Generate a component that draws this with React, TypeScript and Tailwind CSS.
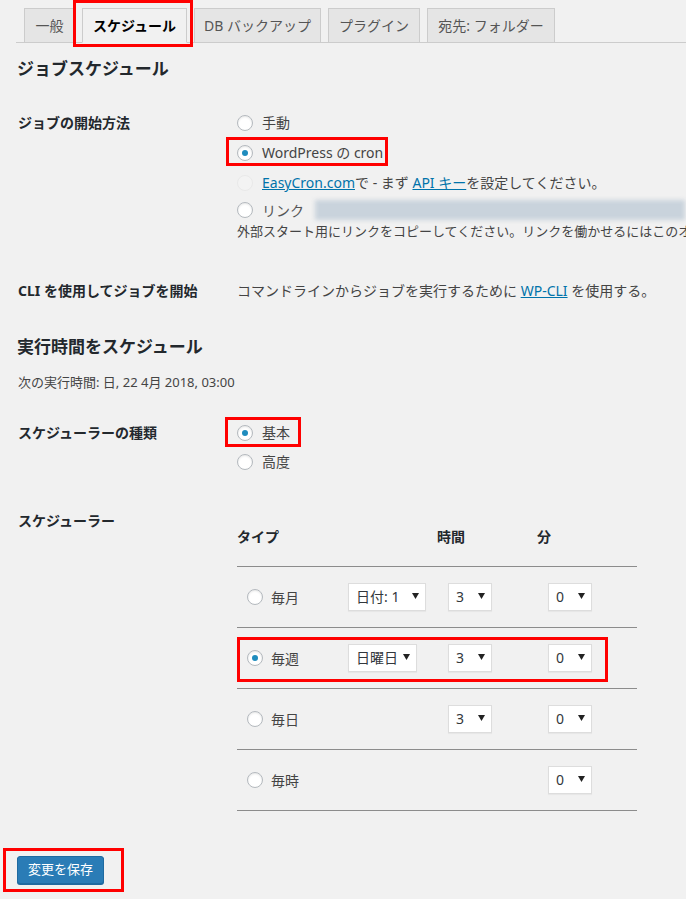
import React from "react";

function Radio({ checked = false, disabled = false }: { checked?: boolean; disabled?: boolean }) {
  if (disabled) {
    return (
      <span className="w-4 h-4 rounded-full border border-[#e9e9e9] bg-[#f3f3f3] shrink-0" />
    );
  }
  return (
    <span className="w-4 h-4 rounded-full border border-[#b4b9be] bg-white shadow-[inset_0_1px_2px_rgba(0,0,0,0.1)] flex items-center justify-center shrink-0">
      {checked && <span className="w-[6px] h-[6px] rounded-full bg-[#1e8cbe]" />}
    </span>
  );
}

function Arrow() {
  return (
    <svg width="7" height="6" viewBox="0 0 7 6" className="shrink-0 -mt-[2px]">
      <polygon points="0,0 7,0 3.5,6" fill="#222" />
    </svg>
  );
}

function Select({ value, w }: { value: string; w: string }) {
  return (
    <div
      className={`${w} h-[28px] bg-white border border-[#ddd] flex items-center justify-between pl-[7px] pr-[6px] text-[14px] text-[#32373c] shadow-[0_1px_1px_rgba(0,0,0,0.04)]`}
    >
      <span className="leading-none">{value}</span>
      <Arrow />
    </div>
  );
}

function Tab({ label, w, active = false }: { label: string; w: string; active?: boolean }) {
  return (
    <div
      className={`${w} h-[35px] -mb-px flex items-center justify-center border border-[#ccc] text-[14px] ${
        active
          ? "bg-[#f1f1f1] border-b-[#f1f1f1] text-black font-bold"
          : "bg-[#e5e5e5] text-[#555] font-normal"
      }`}
    >
      {label}
    </div>
  );
}

function SchedRow({
  label,
  checked,
  first,
  hour = true,
}: {
  label: string;
  checked?: boolean;
  first?: React.ReactNode;
  hour?: boolean;
}) {
  return (
    <div className="flex items-center h-[61px] border-b border-[#8c8c8c]">
      <div className="w-[200px] shrink-0 flex items-center pl-[10px]">
        <div className="w-[101px] shrink-0 flex items-center gap-[8px]">
          <Radio checked={checked} />
          <span className="text-[14px] text-[#444]">{label}</span>
        </div>
        {first}
      </div>
      <div className="w-[100px] shrink-0 pl-[11px]">{hour && <Select value="3" w="w-[44px]" />}</div>
      <div className="w-[100px] shrink-0 pl-[11px]">
        <Select value="0" w="w-[44px]" />
      </div>
    </div>
  );
}

export default function App() {
  return (
    <div className="relative w-full min-h-[899px] overflow-hidden bg-[#f1f1f1] font-['Noto_Sans','Noto_Sans_CJK_JP',sans-serif] text-[#444] whitespace-nowrap">
      {/* tabs */}
      <div className="ml-[16px] pt-[8px] pl-[8px] flex gap-[7px] border-b border-[#ccc]">
        <Tab label="一般" w="w-[51px]" />
        <Tab label="スケジュール" w="w-[105px]" active />
        <Tab label="DB バックアップ" w="w-[127px]" />
        <Tab label="プラグイン" w="w-[92px]" />
        <Tab label="宛先: フォルダー" w="w-[128px]" />
      </div>

      <div className="pl-[17px]">
        <h2 className="mt-[14px] text-[17px] leading-[24px] font-bold text-[#23282d]">ジョブスケジュール</h2>

        {/* job start method */}
        <div className="flex mt-[27px] pl-[1px]">
          <div className="w-[219px] shrink-0 text-[14px] leading-[29px] font-bold text-[#23282d]">ジョブの開始方法</div>
          <div className="flex flex-col text-[14px]">
            <div className="h-[29px] flex items-center gap-[9px]">
              <Radio />
              <span>手動</span>
            </div>
            <div className="h-[31px] flex items-center gap-[9px]">
              <Radio checked />
              <span>WordPress の cron</span>
            </div>
            <div className="h-[29px] flex items-center gap-[9px]">
              <Radio disabled />
              <span>
                <span className="text-[#0073aa] underline">EasyCron.com</span>で - まず{" "}
                <span className="text-[#0073aa] underline">API キー</span>を設定してください。
              </span>
            </div>
            <div className="h-[26px] flex items-center gap-[9px]">
              <Radio />
              <span className="text-[#555]">リンク</span>
              <div className="ml-[2px] w-[370px] shrink-0 h-[20px] bg-[#c9d3dc] blur-[2px]" />
            </div>
            <div className="text-[13px] leading-[16px]">
              外部スタート用にリンクをコピーしてください。リンクを働かせるにはこのオプションを有効にする必要があります。
            </div>
          </div>
        </div>

        {/* CLI */}
        <div className="flex mt-[42px] pl-[1px] text-[14px] leading-[20px]">
          <div className="w-[219px] shrink-0 font-bold text-[#23282d]">CLI を使用してジョブを開始</div>
          <div>
            コマンドラインからジョブを実行するために{" "}
            <span className="text-[#0073aa] underline">WP-CLI</span> を使用する。
          </div>
        </div>

        <h2 className="mt-[34px] text-[17px] leading-[24px] font-bold text-[#23282d]">実行時間をスケジュール</h2>
        <div className="mt-[14px] text-[13px] leading-[18px] pl-[1px]">次の実行時間: 日, 22 4月 2018, 03:00</div>

        {/* scheduler type */}
        <div className="flex mt-[27px] pl-[1px] text-[14px]">
          <div className="w-[219px] shrink-0 leading-[29px] font-bold text-[#23282d]">スケジューラーの種類</div>
          <div className="flex flex-col">
            <div className="h-[29px] flex items-center gap-[9px]">
              <Radio checked />
              <span>基本</span>
            </div>
            <div className="h-[29px] flex items-center gap-[9px]">
              <Radio />
              <span>高度</span>
            </div>
          </div>
        </div>

        {/* scheduler table */}
        <div className="flex mt-[35px] pl-[1px] text-[14px]">
          <div className="w-[219px] shrink-0 leading-[20px] font-bold text-[#23282d]">スケジューラー</div>
          <div className="w-[400px] shrink-0 flex flex-col">
            <div className="flex h-[56px] pt-[16px] border-b border-[#8c8c8c] font-bold text-[#23282d] leading-[20px]">
              <div className="w-[200px]">タイプ</div>
              <div className="w-[100px]">時間</div>
              <div className="w-[100px]">分</div>
            </div>
            <SchedRow label="毎月" first={<Select value="日付: 1" w="w-[78px]" />} />
            <SchedRow label="毎週" checked first={<Select value="日曜日" w="w-[69px]" />} />
            <SchedRow label="毎日" />
            <SchedRow label="毎時" hour={false} />
          </div>
        </div>

        <div className="mt-[45px]">
          <button className="w-[87px] h-[28px] rounded-[3px] bg-[#2a7cb6] border border-[#1f6aa0] text-white text-[13px] shadow-[0_1px_0_#1f6aa0]">
            変更を保存
          </button>
        </div>
      </div>

      {/* annotation boxes */}
      <div className="absolute left-[73px] top-0 w-[120px] h-[47px] border-[3px] border-[#ff0000]" />
      <div className="absolute left-[226px] top-[137px] w-[162px] h-[29px] border-[3px] border-[#ff0000]" />
      <div className="absolute left-[225px] top-[417px] w-[76px] h-[30px] border-[3px] border-[#ff0000]" />
      <div className="absolute left-[237px] top-[637px] w-[371px] h-[45px] border-[3px] border-[#ff0000]" />
      <div className="absolute left-[3px] top-[848px] w-[121px] h-[44px] border-[3px] border-[#ff0000]" />
    </div>
  );
}
